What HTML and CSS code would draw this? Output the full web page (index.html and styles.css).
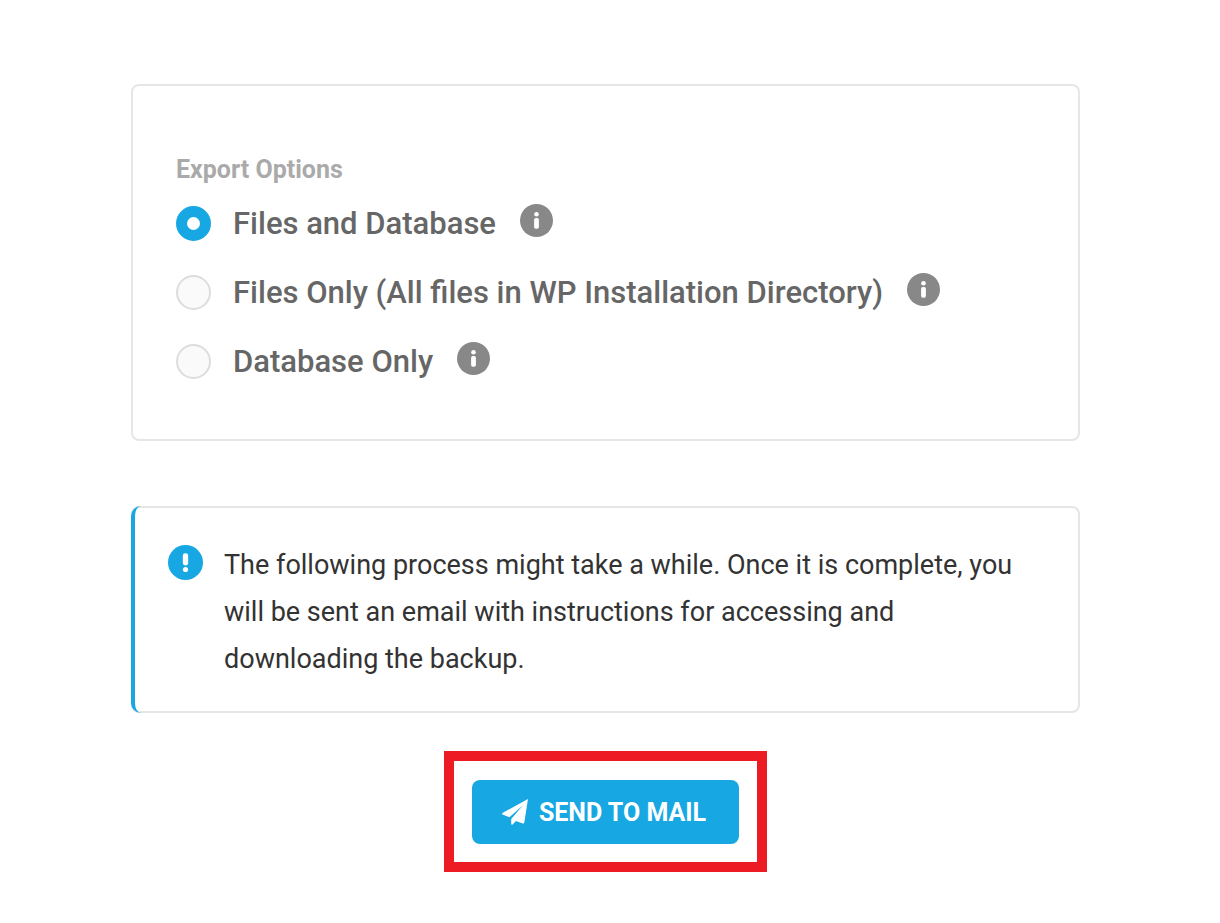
FILE: index.html
```
<!DOCTYPE html>
<html lang="en">
<head>
    <meta charset="UTF-8">
    <meta name="viewport" content="width=device-width, initial-scale=1.0">
    <title>Export Backup</title>
    <link rel="stylesheet" href="styles.css">
</head>
<body>
    <!-- shared info icon -->
    <svg class="defs" aria-hidden="true">
        <symbol id="icon-info" viewBox="0 0 33 33">
            <circle cx="16.5" cy="16.5" r="16.5" fill="#888"/>
            <circle cx="16.5" cy="10.2" r="2.3" fill="#fff"/>
            <rect x="14.1" y="14" width="4.8" height="10.8" rx="1.8" fill="#fff"/>
        </symbol>
    </svg>

    <form id="exportForm" class="export">
        <fieldset class="card options">
            <legend class="options-title">Export Options</legend>
            <div class="option">
                <input type="radio" id="exportAll" name="exportType" value="all" checked>
                <label for="exportAll">Files and Database</label>
                <svg class="info"><use href="#icon-info"/></svg>
            </div>
            <div class="option">
                <input type="radio" id="exportFiles" name="exportType" value="files">
                <label for="exportFiles">Files Only (All files in WP Installation Directory)</label>
                <svg class="info"><use href="#icon-info"/></svg>
            </div>
            <div class="option">
                <input type="radio" id="exportDb" name="exportType" value="db">
                <label for="exportDb">Database Only</label>
                <svg class="info"><use href="#icon-info"/></svg>
            </div>
        </fieldset>

        <div class="card notice">
            <svg class="notice-icon" viewBox="0 0 34 34" aria-hidden="true">
                <circle cx="17" cy="17" r="17" fill="#17a8e3"/>
                <rect x="14.4" y="8" width="5.2" height="12" rx="2.4" fill="#fff"/>
                <circle cx="17" cy="23.8" r="2.5" fill="#fff"/>
            </svg>
            <p>The following process might take a while. Once it is complete, you will be sent an email with instructions for accessing and downloading the backup.</p>
        </div>

        <div class="highlight">
            <button type="submit" class="send">
                <svg class="plane" viewBox="0 0 26 26" aria-hidden="true">
                    <path d="M26 0L.4 14Q-.3 14.9.5 15.4L7.4 18.3L21 6.2L9.2 20V25Q9.4 26.2 10.6 25.6L14 22L20.8 24.4Q22 24.7 22.3 23.6Z" fill="#fff"/>
                </svg>
                <span>SEND TO MAIL</span>
            </button>
        </div>
    </form>
</body>
</html>
```
FILE: styles.css
```
body {
    font-family: Roboto, Arial, sans-serif;
    background-color: #fff;
    margin: 0;
    padding: 0;
}

.defs {
    display: none;
}

.export {
    display: flex;
    flex-direction: column;
    padding: 84px 140px 50px 131px;
}

.card {
    margin: 0;
    min-width: 0;
    border: 2px solid #e6e6e6;
    border-radius: 8px;
}

.options {
    padding: 67px 43px 43px;
}

.options-title {
    float: left;
    width: 100%;
    margin-bottom: 2px;
    padding: 0;
    font-size: 25px;
    font-weight: 700;
    line-height: 34px;
    color: #aaa;
}

.option {
    clear: both;
    display: flex;
    align-items: center;
    height: 69px;
}

.option label {
    margin: 0 24px 0 22px;
    font-size: 31px;
    font-weight: 500;
    line-height: 40px;
    color: #666;
}

input[type="radio"] {
    appearance: none;
    flex: none;
    box-sizing: border-box;
    width: 35px;
    height: 35px;
    margin: 0;
    border: 2px solid #ddd;
    border-radius: 50%;
    background-color: #fafafa;
}

input[type="radio"]:checked {
    border: 11px solid #17a8e3;
    background-color: #fff;
}

.info {
    flex: none;
    width: 33px;
    height: 33px;
    margin-bottom: 6px;
}

.notice {
    position: relative;
    display: flex;
    gap: 21px;
    margin-top: 65px;
    padding: 34px 35px 28px;
}

/* accent bar laid over the left border */
.notice::before {
    content: "";
    position: absolute;
    top: -2px;
    bottom: -2px;
    left: -2px;
    width: 8px;
    border-left: 4px solid #17a8e3;
    border-radius: 10px 0 0 10px;
}

.notice-icon {
    flex: none;
    width: 35px;
    height: 35px;
    margin-top: 3px;
}

.notice p {
    max-width: 800px;
    margin: 0;
    font-size: 27px;
    line-height: 47px;
    color: #333;
}

.highlight {
    align-self: center;
    margin-top: 38px;
    padding: 19px 18px 18px;
    border: 10px solid #ed1c24;
}

.send {
    display: flex;
    align-items: center;
    gap: 11px;
    height: 64px;
    padding: 0 33px 0 30px;
    border: none;
    border-radius: 8px;
    background-color: #17a8e3;
    color: #fff;
    font-family: inherit;
    font-size: 25px;
    font-weight: 700;
    cursor: pointer;
}

.plane {
    width: 26px;
    height: 26px;
}
```
